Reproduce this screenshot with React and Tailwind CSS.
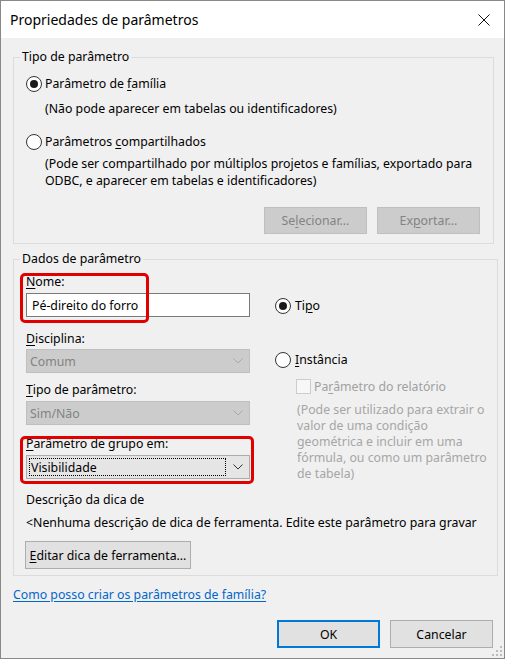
import React from 'react'

const font = { fontFamily: '"Noto Sans", "Open Sans", sans-serif' }

// botão de opção estilo Windows
const Radio = ({ checked }) => (
  <span className="w-[16px] h-[16px] rounded-full border border-[#333333] bg-white flex items-center justify-center shrink-0">
    {checked && <span className="w-[8px] h-[8px] rounded-full bg-[#1a1a1a]" />}
  </span>
)

const Chevron = ({ color }) => (
  <svg width="10" height="6" viewBox="0 0 10 6" className="shrink-0">
    <polyline points="0.5,0.5 5,5 9.5,0.5" fill="none" stroke={color} strokeWidth="1" />
  </svg>
)

const U = ({ children }) => <span className="underline underline-offset-[2px]">{children}</span>

const Select = ({ value, disabled, focused }) => (
  <div
    className={
      disabled
        ? 'h-[24px] w-[224px] border border-[#bfbfbf] bg-[#cccccc] flex items-center justify-between pl-[3px] pr-[6px] text-[#838383]'
        : 'h-[24px] w-[224px] border border-[#acacac] bg-[#e5e5e5] flex items-center justify-between pl-[2px] pr-[6px] text-black'
    }
  >
    <span className={focused ? 'border border-dotted border-black h-[18px] w-[197px] flex items-center pl-[1px]' : ''}>{value}</span>
    <Chevron color={disabled ? '#a8a8a8' : '#333333'} />
  </div>
)

const Button = ({ children, disabled, primary, className = '' }) => (
  <button
    className={
      (disabled
        ? 'bg-[#cccccc] border border-[#bfbfbf] text-[#838383] '
        : primary
        ? 'bg-[#e1e1e1] border-2 border-[#0078d7] text-black '
        : 'bg-[#e1e1e1] border border-[#adadad] text-black ') +
      'flex items-center justify-center ' +
      className
    }
  >
    {children}
  </button>
)

export default function App() {
  return (
    <div style={font} className="relative w-[505px] h-[659px] border border-[#888888] bg-[#f0f0f0] flex flex-col text-[12.3px] leading-[17px] text-black">
      {/* barra de título */}
      <div className="h-[37px] bg-white flex items-center justify-between pl-[9px] pr-[14px] shrink-0">
        <span className="text-[14px]">Propriedades de parâmetros</span>
        <svg width="12" height="12" viewBox="0 0 12 12">
          <path d="M0.5 0.5 L11.5 11.5 M11.5 0.5 L0.5 11.5" stroke="#111" strokeWidth="1" />
        </svg>
      </div>

      <div className="flex flex-col pl-[12px] pr-[11px] pt-[11px]">
        {/* Tipo de parâmetro */}
        <fieldset className="w-[481px] border border-[#dcdcdc] p-0 m-0">
          <legend className="ml-[6px] px-[2px] leading-[16px]">Tipo de parâmetro</legend>
          <div className="pl-[12px] pr-[13px] pb-[9px] flex flex-col">
            <div className="mt-[10px] h-[17px] flex items-center gap-[3px]">
              <Radio checked />
              <span>Parâmetro de <U>f</U>amília</span>
            </div>
            <div className="mt-[8px] pl-[19px]">(Não pode aparecer em tabelas ou identificadores)</div>
            <div className="mt-[16px] h-[17px] flex items-center gap-[3px]">
              <Radio />
              <span>Parâmetros <U>c</U>ompartilhados</span>
            </div>
            <div className="mt-[5px] pl-[19px] whitespace-nowrap">
              (Pode ser compartilhado por múltiplos projetos e famílias, exportado para
              <br />
              ODBC, e aparecer em tabelas e identificadores)
            </div>
            <div className="mt-[18px] flex justify-end gap-[10px]">
              <Button disabled className="w-[103px] h-[27px]">Se<U>l</U>ecionar...</Button>
              <Button disabled className="w-[103px] h-[27px]">Ex<U>p</U>ortar...</Button>
            </div>
          </div>
        </fieldset>

        {/* Dados de parâmetro */}
        <fieldset className="mt-[7px] w-[481px] border border-[#dcdcdc] p-0 m-0">
          <legend className="ml-[6px] px-[2px] leading-[16px]">Dados de parâmetro</legend>
          <div className="pl-[12px] pr-[10px] pb-[6px] flex flex-col">
            <div className="flex">
              <div className="w-[224px] flex flex-col">
                <div className="mt-[6px]"><U>N</U>ome:</div>
                <div className="mt-[3px] h-[24px] border border-[#7a7a7a] bg-white flex items-center pl-[5px]">Pé-direito do forro</div>
                <div className="mt-[13px]"><U>D</U>isciplina:</div>
                <div className="mt-[2px]"><Select value="Comum" disabled /></div>
                <div className="mt-[8px]"><U>T</U>ipo de parâmetro:</div>
                <div className="mt-[3px]"><Select value="Sim/Não" disabled /></div>
                <div className="mt-[10px]"><U>P</U>arâmetro de grupo em:</div>
                <div className="mt-[3px]"><Select value="Visibilidade" focused /></div>
              </div>
              <div className="ml-[25px] flex flex-col">
                <div className="mt-[30px] h-[17px] flex items-center gap-[4px]">
                  <Radio checked />
                  <span>Ti<U>p</U>o</span>
                </div>
                <div className="mt-[37px] h-[17px] flex items-center gap-[4px]">
                  <Radio />
                  <span><U>I</U>nstância</span>
                </div>
                <div className="mt-[10px] pl-[21px] h-[17px] flex items-center gap-[3px] text-[#a0a0a0]">
                  <span className="w-[15px] h-[15px] border border-[#cccccc] bg-[#f7f7f7] shrink-0" />
                  <span>Pa<U>r</U>âmetro do relatório</span>
                </div>
                <div className="mt-[7px] pl-[22px] leading-[16px] text-[#a6a6a6] whitespace-nowrap">
                  (Pode ser utilizado para extrair o<br />
                  valor de uma condição<br />
                  geométrica e incluir em uma<br />
                  fórmula, ou como um parâmetro<br />
                  de tabela)
                </div>
              </div>
            </div>
            <div className="mt-[9px]">Descrição da dica de</div>
            <div className="mt-[6px] whitespace-nowrap overflow-hidden">&lt;Nenhuma descrição de dica de ferramenta. Edite este parâmetro para gravar</div>
            <div className="mt-[10px] -ml-[1px]">
              <Button className="w-[166px] h-[28px]"><U>E</U>ditar dica de ferramenta...</Button>
            </div>
          </div>
        </fieldset>

        <a className="mt-[10px] text-[#0066cc] underline underline-offset-[2px] self-start">Como posso criar os parâmetros de família?</a>

        <div className="mt-[17px] flex justify-end gap-[10px]">
          <Button primary className="w-[103px] h-[28px]">OK</Button>
          <Button className="w-[103px] h-[28px]">Cancelar</Button>
        </div>
      </div>

      {/* marcações vermelhas */}
      <div className="absolute left-[19px] top-[272px] w-[129px] h-[50px] border-[3px] border-[#e00000] rounded-[5px]" />
      <div className="absolute left-[19px] top-[435px] w-[234px] h-[48px] border-[3px] border-[#e00000] rounded-[5px]" />

      {/* alça de redimensionamento */}
      <svg width="12" height="12" viewBox="0 0 12 12" className="absolute right-[1px] bottom-[1px]">
        <rect x="9" y="1" width="2" height="2" fill="#bcbcbc" />
        <rect x="5" y="5" width="2" height="2" fill="#bcbcbc" />
        <rect x="9" y="5" width="2" height="2" fill="#bcbcbc" />
        <rect x="1" y="9" width="2" height="2" fill="#bcbcbc" />
        <rect x="5" y="9" width="2" height="2" fill="#bcbcbc" />
        <rect x="9" y="9" width="2" height="2" fill="#bcbcbc" />
      </svg>
    </div>
  )
}
